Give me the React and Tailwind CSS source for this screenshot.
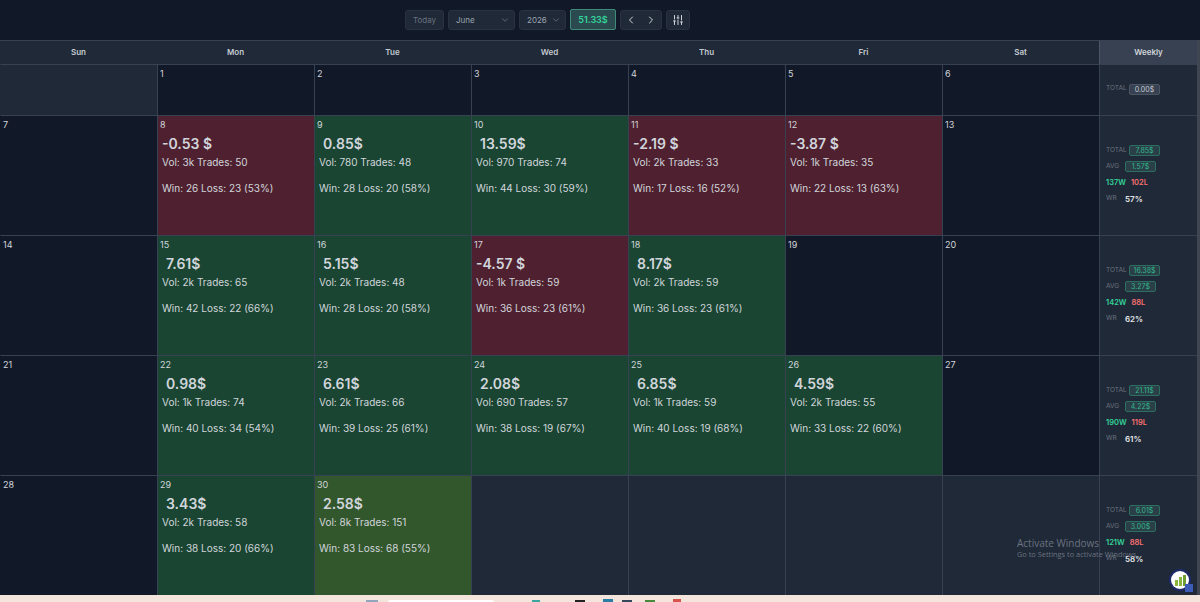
import React from "react";
import { ChevronDown, ChevronLeft, ChevronRight, SlidersVertical } from "lucide-react";

const days = ["Sun", "Mon", "Tue", "Wed", "Thu", "Fri", "Sat"];

const rows = [
  {
    h: "h-[51px]",
    cells: [
      { empty: true }, { d: 1 }, { d: 2 }, { d: 3 }, { d: 4 }, { d: 5 }, { d: 6 },
    ],
    w: { total: "0.00$", neutral: true },
  },
  {
    h: "h-[120px]",
    cells: [
      { d: 7 },
      { d: 8, a: "-0.53 $", v: "Vol: 3k Trades: 50", r: "Win: 26 Loss: 23 (53%)", c: "red" },
      { d: 9, a: "0.85$", v: "Vol: 780 Trades: 48", r: "Win: 28 Loss: 20 (58%)", c: "green" },
      { d: 10, a: "13.59$", v: "Vol: 970 Trades: 74", r: "Win: 44 Loss: 30 (59%)", c: "green" },
      { d: 11, a: "-2.19 $", v: "Vol: 2k Trades: 33", r: "Win: 17 Loss: 16 (52%)", c: "red" },
      { d: 12, a: "-3.87 $", v: "Vol: 1k Trades: 35", r: "Win: 22 Loss: 13 (63%)", c: "red" },
      { d: 13 },
    ],
    w: { total: "7.85$", avg: "1.57$", win: "137W", loss: "102L", wr: "57%" },
  },
  {
    h: "h-[120px]",
    cells: [
      { d: 14 },
      { d: 15, a: "7.61$", v: "Vol: 2k Trades: 65", r: "Win: 42 Loss: 22 (66%)", c: "green" },
      { d: 16, a: "5.15$", v: "Vol: 2k Trades: 48", r: "Win: 28 Loss: 20 (58%)", c: "green" },
      { d: 17, a: "-4.57 $", v: "Vol: 1k Trades: 59", r: "Win: 36 Loss: 23 (61%)", c: "red" },
      { d: 18, a: "8.17$", v: "Vol: 2k Trades: 59", r: "Win: 36 Loss: 23 (61%)", c: "green" },
      { d: 19 },
      { d: 20 },
    ],
    w: { total: "16.38$", avg: "3.27$", win: "142W", loss: "88L", wr: "62%" },
  },
  {
    h: "h-[120px]",
    cells: [
      { d: 21 },
      { d: 22, a: "0.98$", v: "Vol: 1k Trades: 74", r: "Win: 40 Loss: 34 (54%)", c: "green" },
      { d: 23, a: "6.61$", v: "Vol: 2k Trades: 66", r: "Win: 39 Loss: 25 (61%)", c: "green" },
      { d: 24, a: "2.08$", v: "Vol: 690 Trades: 57", r: "Win: 38 Loss: 19 (67%)", c: "green" },
      { d: 25, a: "6.85$", v: "Vol: 1k Trades: 59", r: "Win: 40 Loss: 19 (68%)", c: "green" },
      { d: 26, a: "4.59$", v: "Vol: 2k Trades: 55", r: "Win: 33 Loss: 22 (60%)", c: "green" },
      { d: 27 },
    ],
    w: { total: "21.11$", avg: "4.22$", win: "190W", loss: "119L", wr: "61%" },
  },
  {
    h: "h-[120px]",
    cells: [
      { d: 28 },
      { d: 29, a: "3.43$", v: "Vol: 2k Trades: 58", r: "Win: 38 Loss: 20 (66%)", c: "green" },
      { d: 30, a: "2.58$", v: "Vol: 8k Trades: 151", r: "Win: 83 Loss: 68 (55%)", c: "lime" },
      { empty: true }, { empty: true }, { empty: true }, { empty: true },
    ],
    w: { total: "6.01$", avg: "3.00$", win: "121W", loss: "88L", wr: "58%" },
  },
];

const tone = {
  red: "bg-[#4f2130]",
  green: "bg-[#1a4532]",
  lime: "bg-[#33572d]",
};

function Cell({ cell }) {
  if (cell.empty) {
    return <div className="border-l border-t border-[#374151] bg-[#1f2937] first:border-l-transparent" />;
  }
  const bg = cell.c ? tone[cell.c] : "bg-[#111827]";
  const negative = cell.a && cell.a.startsWith("-");
  return (
    <div className={`flex flex-col border-l border-t border-[#374151] first:border-l-transparent ${bg}`}>
      <div className="h-[17px] pl-[2px] pt-[3px] text-[9px] leading-[12px] text-[#d1d5db]">{cell.d}</div>
      {cell.a && (
        <div className="flex flex-col pl-[4px] text-[#d1d5db]">
          <div className={`mt-[1px] h-[20px] text-[14px] font-semibold leading-[20px] ${negative ? "" : "pl-[4px]"}`}>
            {cell.a}
          </div>
          <div className="h-[16px] text-[10px] leading-[16px]">{cell.v}</div>
          <div className="mt-[10px] h-[16px] text-[10px] leading-[16px]">{cell.r}</div>
        </div>
      )}
    </div>
  );
}

function Badge({ children, neutral }) {
  return (
    <span
      className={`flex h-[11px] min-w-[31px] items-center justify-center rounded-[2px] border px-[3px] text-[7px] leading-none ${
        neutral
          ? "border-[#4b5563] bg-[#374151] text-[#c4c9d1]"
          : "border-[#2c6e60] bg-[#2b3f49] text-[#2fb98a]"
      }`}
    >
      {children}
    </span>
  );
}

function Weekly({ w }) {
  return (
    <div className="flex flex-col justify-center gap-[5px] border-l border-t border-[#374151] bg-[#1f2937] pb-[2px] pl-[6px]">
      <div className="flex h-[11px] items-center gap-[4px]">
        <span className="w-[19px] text-[6.5px] text-[#6b7280]">TOTAL</span>
        <Badge neutral={w.neutral}>{w.total}</Badge>
      </div>
      {w.avg && (
        <>
          <div className="flex h-[11px] items-center">
            <span className="w-[19px] text-[6.5px] text-[#6b7280]">AVG</span>
            <Badge>{w.avg}</Badge>
          </div>
          <div className="flex h-[11px] items-center gap-[5px] text-[7.5px] font-semibold">
            <span className="text-[#34d399]">{w.win}</span>
            <span className="text-[#f87171]">{w.loss}</span>
          </div>
          <div className="flex h-[11px] items-center">
            <span className="w-[19px] text-[6.5px] text-[#6b7280]">WR</span>
            <span className="text-[8px] font-semibold text-[#e5e7eb]">{w.wr}</span>
          </div>
        </>
      )}
    </div>
  );
}

const ctl = "flex h-[20px] items-center rounded-[3px] border border-[#283241] bg-[#1f2937] text-[8px]";

export default function App() {
  return (
    <div className="relative flex h-[602px] w-[1200px] flex-col overflow-hidden bg-[#111827] font-['Inter',sans-serif]">
      <div className="flex h-[40px] items-center justify-center gap-[4px] pb-[1px] pr-[105px]">
        <div className={`${ctl} w-[39px] justify-center text-[#6b7280]`}>Today</div>
        <div className={`${ctl} w-[67px] justify-between pl-[7px] pr-[4px] text-[#9ca3af]`}>
          June <ChevronDown className="h-[10px] w-[10px] text-[#6b7280]" />
        </div>
        <div className={`${ctl} w-[47px] justify-between pl-[7px] pr-[4px] text-[#9ca3af]`}>
          2026 <ChevronDown className="h-[10px] w-[10px] text-[#6b7280]" />
        </div>
        <div className="flex h-[21px] w-[46px] items-center justify-center rounded-[2px] border border-[#3f8a78] bg-[#2b4a50] text-[9px] font-semibold text-[#34d399]">
          51.33$
        </div>
        <div className={`${ctl} w-[42px] justify-between px-[4px] text-[#d1d5db]`}>
          <ChevronLeft className="h-[12px] w-[12px]" />
          <ChevronRight className="h-[12px] w-[12px]" />
        </div>
        <div className={`${ctl} w-[24px] justify-center text-[#d1d5db]`}>
          <SlidersVertical className="h-[12px] w-[12px]" />
        </div>
      </div>

      <div className="flex flex-1">
        <div className="flex w-[1197px] flex-col">
          <div className="grid h-[24px] grid-cols-[repeat(7,157px)_98px] border-t border-[#374151] bg-[#1f2937] text-[8px] font-semibold text-[#c4c9d1]">
            {days.map((d) => (
              <div key={d} className="flex items-center justify-center pb-[2px]">
                {d}
              </div>
            ))}
            <div className="flex items-center justify-center border-l border-[#4b5563] bg-[#374151] pb-[2px] text-[#d1d5db]">
              Weekly
            </div>
          </div>
          {rows.map((row, i) => (
            <div key={i} className={`grid ${row.h} grid-cols-[repeat(7,157px)_98px]`}>
              {row.cells.map((c, j) => (
                <Cell key={j} cell={c} />
              ))}
              <Weekly w={row.w} />
            </div>
          ))}
        </div>
        <div className="w-[3px] bg-[#3f4652]" />
      </div>

      <div className="relative flex h-[7px] items-start bg-[#f3e4dc]">
        <div className="absolute left-[388px] top-[5px] h-[2px] w-[106px] rounded-t-[2px] bg-white" />
        <div className="absolute left-[366px] top-[5px] h-[2px] w-[12px] bg-[#8fa6bd]" />
        <div className="absolute left-[532px] top-[5px] h-[2px] w-[8px] bg-[#3aa7a0]" />
        <div className="absolute left-[575px] top-[5px] h-[2px] w-[10px] bg-[#222]" />
        <div className="absolute left-[603px] top-[4px] h-[3px] w-[10px] bg-[#2b7fa6]" />
        <div className="absolute left-[622px] top-[5px] h-[2px] w-[10px] bg-[#34495e]" />
        <div className="absolute left-[645px] top-[5px] h-[2px] w-[10px] bg-[#4a8a3d]" />
        <div className="absolute left-[673px] top-[4px] h-[3px] w-[8px] bg-[#d9534f]" />
      </div>

      <div className="absolute left-[1017px] top-[536px] text-[10px] leading-[14px] text-[#6b7280] font-['Open_Sans',sans-serif]">
        Activate Windows
      </div>
      <div className="absolute left-[1017px] top-[548px] whitespace-nowrap text-[7.4px] leading-[12px] text-[#6b7280] font-['Open_Sans',sans-serif]">
        Go to Settings to activate Windows.
      </div>

      <div className="absolute left-[1171px] top-[571px] flex h-[18px] w-[18px] items-end justify-center gap-[1px] rounded-full bg-white pb-[3px] ring-2 ring-[#1e2a6a]">
        <span className="h-[6px] w-[3px] bg-[#8ab63f]" />
        <span className="h-[9px] w-[3px] bg-[#8ab63f]" />
        <span className="h-[11px] w-[3px] bg-[#6f9f35]" />
      </div>
      <div className="absolute left-[1185px] top-[584px] h-[8px] w-[8px] bg-[#3b5bb5]" />
    </div>
  );
}
